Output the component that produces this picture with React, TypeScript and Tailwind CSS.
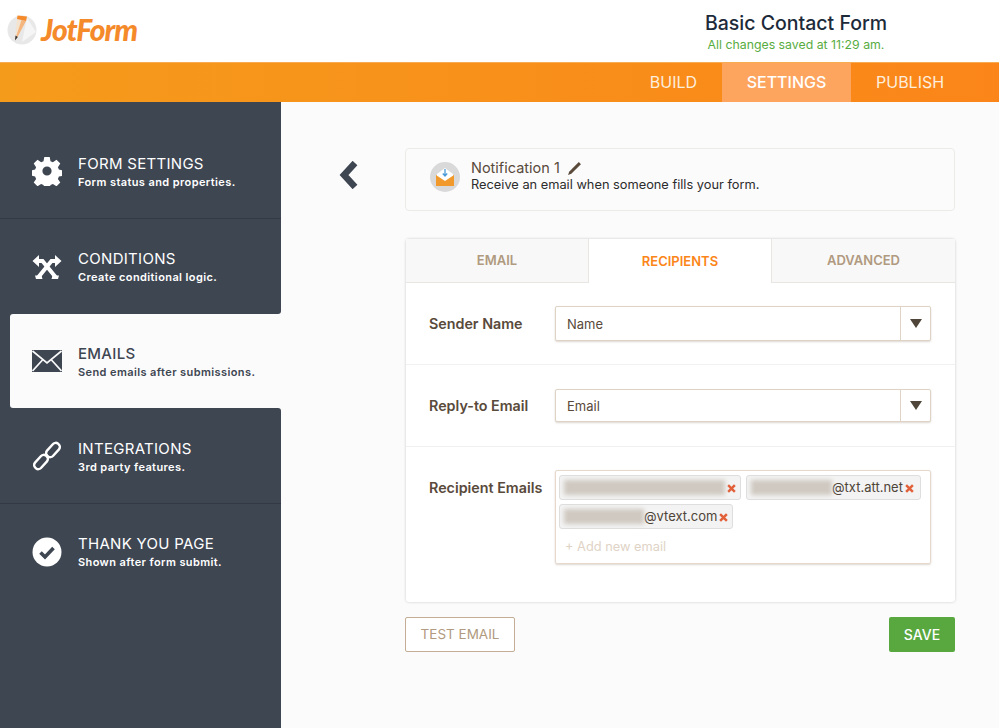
const font = "font-['Inter',sans-serif]";

function Gear() {
  return (
    <svg width="30" height="30" viewBox="0 0 30 30" fill="#fff">
      <path
        fillRule="evenodd"
        d="M12.3 1h5.4l.8 4.2 2.4 1 3.6-2.4 3.8 3.8-2.4 3.6 1 2.4 4.1.8v5.3l-4.1.8-1 2.4 2.4 3.6-3.8 3.8-3.6-2.4-2.4 1-.8 2.6h-5.4l-.8-2.600-2.400-1-3.600 2.400-3.800-3.800 2.400-3.600-1-2.400-3.500-.8v-5.300l3.500-.8 1-2.400-2.400-3.600 3.800-3.800 3.600 2.400 2.400-1zM15 10.400a4.600 4.600 0 1 0 0 9.200 4.600 4.600 0 0 0 0-9.200z"
      />
    </svg>
  );
}

function Tools() {
  return (
    <svg width="30" height="26" viewBox="0 0 30 26" fill="#fff">
      <path d="M6 7h4.500L23.500 23" fill="none" stroke="#fff" strokeWidth="4" />
      <path d="M24 7h-4.500L6.500 23" fill="none" stroke="#fff" strokeWidth="4" />
      <path d="M.5 7 7 1v12zM29.500 7 23 1v12z" />
      <path d="M3 21.500h6.500l1 3.500H4zM27 21.500h-6.500l-1 3.500H26z" />
    </svg>
  );
}

function Envelope({ color }: { color: string }) {
  return (
    <svg width="30" height="22" viewBox="0 0 30 22">
      <rect x="0" y="0" width="30" height="22" fill={color} />
      <path d="M0.500 1 15 13 29.500 1M0.500 21 10.500 10M29.500 21 19.500 10" fill="none" stroke="#fbfbfb" strokeWidth="1.700" />
    </svg>
  );
}

function Chain() {
  return (
    <svg width="30" height="30" viewBox="0 0 30 30" fill="none" stroke="#fff" strokeWidth="2.400">
      <rect x="13" y="5" width="16" height="8" rx="3.500" transform="rotate(-48 21 9)" />
      <rect x="1" y="17" width="16" height="8" rx="3.500" transform="rotate(-48 9 21)" />
    </svg>
  );
}

function CheckCircle() {
  return (
    <svg width="30" height="30" viewBox="0 0 30 30">
      <circle cx="15" cy="15" r="14.500" fill="#fff" />
      <path d="M8.500 15.500 13 20l8.500-9" fill="none" stroke="#3e4652" strokeWidth="3.600" />
    </svg>
  );
}

function LogoMark() {
  return (
    <svg width="30" height="32" viewBox="0 0 30 32">
      <circle cx="15" cy="17" r="14.500" fill="#e8e8e8" />
      <path d="M20 5 29 19 15 29z" fill="#f5f5f5" />
      <path d="M10 6 14.500 7 9 25 8 27z" fill="#f4e3cf" />
      <path d="M14.500 7 19 8 10.500 24 8 27z" fill="#f5b57e" />
      <path d="M10.500 2.500 20 3.500 19 8 10 6z" fill="#f58a2b" />
      <path d="M8.500 22.500 10.800 24 8 27.500z" fill="#333" />
    </svg>
  );
}

function CloseMark() {
  return (
    <svg width="9" height="9" viewBox="0 0 8 8" className="ml-[2px] mt-[2px] shrink-0">
      <path d="M1 1l6 6M7 1 1 7" stroke="#e2613a" strokeWidth="2.200" />
    </svg>
  );
}

function SideItem({
  icon,
  title,
  sub,
  active,
  divider,
  rounded,
  h,
}: {
  icon: React.ReactNode;
  title: string;
  sub: string;
  active?: boolean;
  divider?: boolean;
  rounded?: string;
  h: string;
}) {
  const body = (
    <>
      <div className="flex w-[30px] shrink-0 justify-center">{icon}</div>
      <div className="ml-[16px] pt-[1px]">
        <div className={`text-[15px] leading-[18px] tracking-[0.3px] ${active ? "font-medium text-[#3e4652]" : "text-white"}`}>{title}</div>
        <div className={`mt-[2px] text-[11px] font-semibold leading-[14px] tracking-[0.4px] ${active ? "text-[#3e4652]" : "text-white"}`}>{sub}</div>
      </div>
    </>
  );
  if (active) {
    return (
      <div className={`bg-[linear-gradient(to_right,#3e4652_20px,#fbfbfb_20px)] pl-[10px] ${h}`}>
        <div className="flex h-full items-center rounded-l-[3px] bg-[#fbfbfb] pl-[22px]">{body}</div>
      </div>
    );
  }
  return (
    <div className={`flex items-center bg-[#3e4652] pl-[32px] ${h} ${divider ? "border-b border-[#333a45]" : ""} ${rounded ?? ""}`}>
      {body}
    </div>
  );
}

function SelectBox({ value, h }: { value: string; h: string }) {
  return (
    <div className={`flex w-[376px] items-stretch rounded-[2px] border border-[#dfd3c5] bg-white shadow-[0_1px_2px_rgba(120,100,80,0.25)] ${h}`}>
      <div className="flex flex-1 items-center pl-[11px] pt-[2px] text-[13px] text-[#594a3b]">{value}</div>
      <div className="flex w-[30px] items-center justify-center border-l border-[#dfd3c5]">
        <div className="h-0 w-0 border-x-[6px] border-t-[9px] border-x-transparent border-t-[#4f4538]" />
      </div>
    </div>
  );
}

function Chip({ blur, text, tail }: { blur: string; text?: string; tail: string }) {
  return (
    <div className={`flex h-[25px] items-center rounded-[3px] border border-[#dedede] bg-[#f3f3f3] pl-[4px] ${tail}`}>
      <div className={`h-[15px] rounded-[1px] bg-[#cfc9c1] blur-[2px] ${blur}`} />
      {text && <span className="text-[13px] text-[#4f4538]">{text}</span>}
      <CloseMark />
    </div>
  );
}

export default function App() {
  return (
    <div className={`flex h-[728px] w-[999px] flex-col overflow-hidden bg-[#fbfbfb] ${font}`}>
      <header className="flex h-[62px] shrink-0 bg-white">
        <div className="flex items-center pb-[4px] pl-[7px]">
          <LogoMark />
          <span className="ml-[4px] font-['Lato',sans-serif] text-[30px] font-black italic leading-none tracking-[-1px] text-[#f58a2b]">JotForm</span>
        </div>
        <div className="ml-auto mr-[112px] flex w-[182px] flex-col items-center pt-[11px]">
          <div className="whitespace-nowrap text-[19.500px] font-medium leading-[24px] text-[#1d2a3a]">Basic Contact Form</div>
          <div className="mt-[3px] whitespace-nowrap text-[12.300px] leading-[14px] text-[#58ac3f]">All changes saved at 11:29 am.</div>
        </div>
      </header>
      <nav className="flex h-[40px] shrink-0 justify-end border-t border-[#f7ab52] bg-gradient-to-r from-[#f59b1b] to-[#fb8519] text-[16px] text-white">
        <div className="flex w-[102px] items-center justify-center pb-[2px] pl-[5px] text-[#fdeedd]">BUILD</div>
        <div className="flex w-[129px] items-center justify-center bg-[#fda55f] pb-[2px] font-medium">SETTINGS</div>
        <div className="flex w-[148px] items-center justify-start pb-[2px] pl-[25px] text-[#fdeedd]">PUBLISH</div>
      </nav>
      <div className="flex flex-1">
        <aside className="flex w-[281px] shrink-0 flex-col">
          <div className="h-[22px] bg-[#3e4652]" />
          <SideItem icon={<Gear />} title="FORM SETTINGS" sub="Form status and properties." divider h="h-[95px]" />
          <SideItem icon={<Tools />} title="CONDITIONS" sub="Create conditional logic." h="h-[95px]" rounded="rounded-br-[3px]" />
          <SideItem icon={<Envelope color="#3e4652" />} title="EMAILS" sub="Send emails after submissions." active h="h-[94px]" />
          <SideItem icon={<Chain />} title="INTEGRATIONS" sub="3rd party features." divider h="h-[96px]" rounded="rounded-tr-[3px] pt-[1px]" />
          <SideItem icon={<CheckCircle />} title="THANK YOU PAGE" sub="Shown after form submit." h="h-[95px]" />
          <div className="flex-1 bg-[#3e4652]" />
        </aside>
        <main className="flex min-w-0 flex-1 pl-[58px] pt-[46px]">
          <svg width="20" height="28" viewBox="0 0 20 28" className="mt-[13px] shrink-0">
            <path d="M16 2 5 14l11 12" fill="none" stroke="#3e4652" strokeWidth="6.500" />
          </svg>
          <div className="ml-[46px] w-[550px]">
            <div className="flex h-[63px] items-center rounded-[4px] border border-[#ebebe8] pb-[6px] pl-[24px]">
              <svg width="30" height="30" viewBox="0 0 30 30" className="shrink-0">
                <circle cx="15" cy="15" r="15" fill="#d9d9d9" />
                <path d="M7 12 15 6l8 6v8H7z" fill="#fff" />
                <path d="M6 13 15 19l9-6v11H6z" fill="#f19a2b" />
                <path d="M15 7v7M12.800 11.500 15 14l2.200-2.500" fill="none" stroke="#4a9ad8" strokeWidth="1.300" />
              </svg>
              <div className="ml-[11px] pb-[2px]">
                <div className="flex items-center text-[14.500px] leading-[18px] text-[#594a3b]">
                  Notification 1
                  <svg width="15" height="15" viewBox="0 0 14 14" className="ml-[7px]">
                    <path d="M1 13 2 10 11 1l2 2-9 9z" fill="#594a3b" />
                  </svg>
                </div>
                <div className="text-[12.800px] leading-[15px] text-[#2c2c2c]">Receive an email when someone fills your form.</div>
              </div>
            </div>
            <div className="ml-[1px] mt-[28px] h-[363px] rounded-[3px] bg-white shadow-[0_0_3px_rgba(0,0,0,0.2)]">
              <div className="flex h-[44px] text-[13px] font-semibold">
                <div className="flex w-[182px] items-center justify-center border-b border-[#e9e5e0] bg-[#f8f8f8] pt-[1px] text-[#b09a80]">EMAIL</div>
                <div className="flex w-[184px] items-center justify-center border-x border-[#e9e5e0] pt-[1px] text-[#fb8519]">RECIPIENTS</div>
                <div className="flex flex-1 items-center justify-center border-b border-[#e9e5e0] bg-[#f8f8f8] pt-[1px] text-[#b09a80]">ADVANCED</div>
              </div>
              <div className="flex h-[82px] items-center border-b border-[#f1f1f1] pl-[23px]">
                <div className="w-[126px] pt-[1px] text-[14.300px] font-semibold text-[#594a3b]">Sender Name</div>
                <SelectBox value="Name" h="h-[35px]" />
              </div>
              <div className="flex h-[82px] items-center border-b border-[#f1f1f1] pl-[23px]">
                <div className="w-[126px] text-[14.300px] font-semibold text-[#594a3b]">Reply-to Email</div>
                <SelectBox value="Email" h="h-[33px]" />
              </div>
              <div className="flex pl-[23px] pt-[23px]">
                <div className="w-[126px] pt-[9px] text-[14.300px] font-semibold leading-[18px] text-[#594a3b]">Recipient Emails</div>
                <div className="h-[94px] w-[376px] rounded-[2px] border border-[#e6d9cc] px-[3px] pt-[4px] shadow-[0_1px_2px_rgba(120,100,80,0.25)]">
                  <div className="flex flex-wrap gap-x-[5px] gap-y-[4px]">
                    <Chip blur="w-[161px]" tail="w-[182px]" />
                    <Chip blur="w-[81px]" text="@txt.att.net" tail="w-[175px]" />
                    <Chip blur="w-[80px]" text="@vtext.com" tail="w-[174px]" />
                  </div>
                  <div className="mt-[10px] pl-[6px] text-[12.800px] leading-[16px] text-[#e0d3c6]">+ Add new email</div>
                </div>
              </div>
            </div>
            <div className="mt-[15px] flex justify-between">
              <div className="flex h-[35px] w-[110px] items-center justify-center rounded-[2px] border border-[#c4ad94] bg-white text-[13.500px] text-[#b09a80]">TEST EMAIL</div>
              <div className="flex h-[35px] w-[66px] items-center justify-center rounded-[2px] bg-[#58a83f] text-[14px] font-medium text-white">SAVE</div>
            </div>
          </div>
        </main>
      </div>
    </div>
  );
}
